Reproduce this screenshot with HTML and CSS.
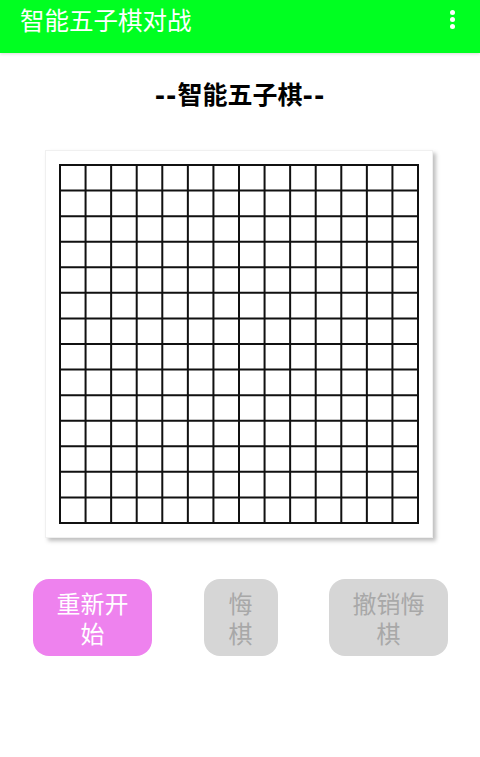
FILE: index.html
```html
<!DOCTYPE html>
<html lang="zh-CN">
<head>
    <meta charset="UTF-8">
    <meta name="viewport" content="width=device-width, initial-scale=1.0">
    <title>智能五子棋对战</title>
    <link rel="stylesheet" href="styles.css">
</head>
<body>
    <div class="toolbar">
        <div class="toolbar-title">智能五子棋对战</div>
        <div class="menu-dots">
            <span></span>
            <span></span>
            <span></span>
        </div>
    </div>

    <div class="page-title"><span class="dash">--</span>智能五子棋<span class="dash">--</span></div>

    <div class="board-wrap">
        <div class="board">
            <svg class="grid" width="360" height="360" viewBox="0 0 360 360">
                <path d="M1 0V360 M26.57 0V360 M52.14 0V360 M77.71 0V360 M103.29 0V360 M128.86 0V360 M154.43 0V360 M180 0V360 M205.57 0V360 M231.14 0V360 M256.71 0V360 M282.29 0V360 M307.86 0V360 M333.43 0V360 M359 0V360
                         M0 1H360 M0 26.57H360 M0 52.14H360 M0 77.71H360 M0 103.29H360 M0 128.86H360 M0 154.43H360 M0 180H360 M0 205.57H360 M0 231.14H360 M0 256.71H360 M0 282.29H360 M0 307.86H360 M0 333.43H360 M0 359H360"
                      stroke="#111" stroke-width="2" fill="none"/>
            </svg>
        </div>
    </div>

    <div class="controls">
        <button class="btn restart">重新开始</button>
        <button class="btn undo" disabled>悔棋</button>
        <button class="btn redo" disabled>撤销悔棋</button>
    </div>
</body>
</html>
```

FILE: styles.css
```css
body {
    margin: 0;
    background-color: #ffffff;
    font-family: 'Noto Sans CJK SC', 'Noto Sans', sans-serif;
}

.toolbar {
    display: flex;
    justify-content: space-between;
    align-items: flex-start;
    height: 53px;
    background-color: #00ff21;
    box-shadow: 0 1px 3px rgba(0, 0, 0, 0.15);
}

.toolbar-title {
    color: #ffffff;
    font-size: 24.5px;
    line-height: 30px;
    padding: 5px 0 0 20px;
}

.menu-dots {
    display: flex;
    flex-direction: column;
    gap: 2px;
    padding: 10px 25px 0 0;
}

.menu-dots span {
    width: 5px;
    height: 5px;
    border-radius: 50%;
    background-color: #ffffff;
}

.page-title {
    text-align: center;
    font-size: 25px;
    font-weight: bold;
    line-height: 30px;
    height: 30px;
    margin-top: 25px;
    color: #000000;
}

.dash {
    font-family: 'DejaVu Sans', sans-serif;
    letter-spacing: 1px;
}

.board-wrap {
    display: flex;
    justify-content: center;
    margin-top: 42px;
    padding-right: 3px;
}

.board {
    background-color: #ffffff;
    border: 1px solid #f0f0f0;
    padding: 13px;
    box-shadow: 3px 3px 4px rgba(0, 0, 0, 0.25);
}

.grid {
    display: block;
}

.controls {
    display: flex;
    justify-content: space-between;
    align-items: center;
    padding: 0 32px 0 33px;
    margin-top: 41px;
}

.btn {
    border: none;
    border-radius: 16px;
    font-family: inherit;
    font-size: 24px;
    line-height: 30px;
    padding: 8px 22px;
    height: 77px;
}

.restart,
.redo {
    width: 119px;
}

.undo {
    width: 74px;
}

.restart {
    background-color: #ee82ee;
    color: #ffffff;
}

.undo,
.redo {
    background-color: #d6d6d6;
    color: #a8a8a8;
}
```
